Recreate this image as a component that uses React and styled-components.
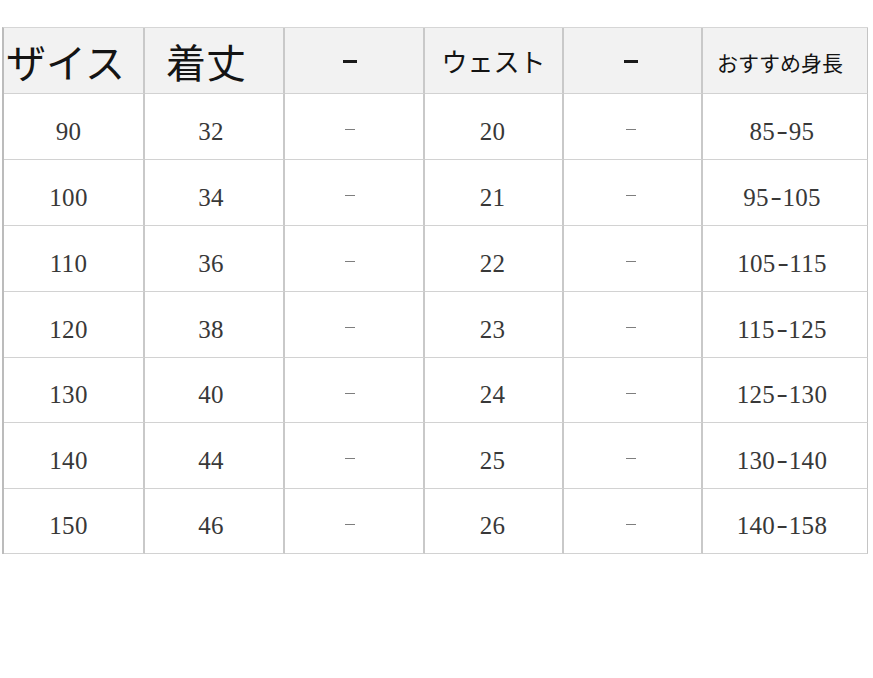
import React from "react";
import styled, { createGlobalStyle } from "styled-components";

const Global = createGlobalStyle`
  html, body { margin: 0; padding: 0; background: #ffffff; }
  body { width: 873px; height: 678px; overflow: hidden; }
`;

const Page = styled.div`
  padding-top: 27px;
  padding-left: 2px;
`;

const Table = styled.div`
  display: grid;
  grid-template-columns: 141px 140px 140px 139px 139px 165px;
  grid-template-rows: 66px 66px 66px 66px 66px 65px 66px 65px;
  width: max-content;
  border-top: 1px solid #d6d6d6;
  border-left: 2px solid #bcbcbc;
`;

const Cell = styled.div`
  box-sizing: border-box;
  display: flex;
  align-items: center;
  justify-content: center;
  padding-right: ${(p) => p.$shift || 0}px;
  border-right: ${(p) => (p.$last ? "1px solid #c4c4c4" : "2px solid #c9c9c9")};
  border-bottom: 1px solid #d2d2d2;
  background: ${(p) => (p.$head ? "#f2f2f2" : "#ffffff")};
  white-space: nowrap;
  overflow: visible;
`;

const HeadText = styled.span`
  font-family: "Noto Sans CJK JP", "Noto Sans", sans-serif;
  font-size: ${(p) => p.$size}px;
  color: #141414;
  margin-top: ${(p) => p.$down || 0}px;
  line-height: 1;
`;

const HeadDash = styled.span`
  display: block;
  width: 14px;
  height: 3px;
  background: #1a1a1a;
  margin-top: 2px;
`;

const Num = styled.span`
  font-family: "Liberation Serif", "Times New Roman", serif;
  font-size: 25px;
  color: #383838;
  margin-top: 9px;
  line-height: 1;
  letter-spacing: 0.3px;
`;

const Hyphen = styled.span`
  display: inline-block;
  margin: 0 2px 0 3px;
  transform: translateY(-1px) scaleX(1.35);
`;

const BodyDash = styled.span`
  display: block;
  width: 10px;
  height: 1px;
  background: #7e7e7e;
  margin-top: 6px;
`;

const rows = [
  ["90", "32", "20", "85-95"],
  ["100", "34", "21", "95-105"],
  ["110", "36", "22", "105-115"],
  ["120", "38", "23", "115-125"],
  ["130", "40", "24", "125-130"],
  ["140", "44", "25", "130-140"],
  ["150", "46", "26", "140-158"],
];

function Range({ value }) {
  const [a, b] = value.split("-");
  return (
    <Num>
      {a}
      <Hyphen>-</Hyphen>
      {b}
    </Num>
  );
}

export default function App() {
  return (
    <>
      <Global />
      <Page>
        <Table>
          <Cell $head $shift={16}>
            <HeadText $size={40}>ザイス</HeadText>
          </Cell>
          <Cell $head $shift={16}>
            <HeadText $size={40}>着丈</HeadText>
          </Cell>
          <Cell $head $shift={8}>
            <HeadDash aria-label="−" />
          </Cell>
          <Cell $head>
            <HeadText $size={26}>ウェスト</HeadText>
          </Cell>
          <Cell $head $shift={4}>
            <HeadDash aria-label="−" />
          </Cell>
          <Cell $head $last $shift={10}>
            <HeadText $size={21} $down={4}>おすすめ身長</HeadText>
          </Cell>
          {rows.map((r) => (
            <React.Fragment key={r[0]}>
              <Cell $shift={10}>
                <Num>{r[0]}</Num>
              </Cell>
              <Cell $shift={6}>
                <Num>{r[1]}</Num>
              </Cell>
              <Cell $shift={8}>
                <BodyDash aria-label="−" />
              </Cell>
              <Cell $shift={2}>
                <Num>{r[2]}</Num>
              </Cell>
              <Cell $shift={4}>
                <BodyDash aria-label="−" />
              </Cell>
              <Cell $last $shift={6}>
                <Range value={r[3]} />
              </Cell>
            </React.Fragment>
          ))}
        </Table>
      </Page>
    </>
  );
}
